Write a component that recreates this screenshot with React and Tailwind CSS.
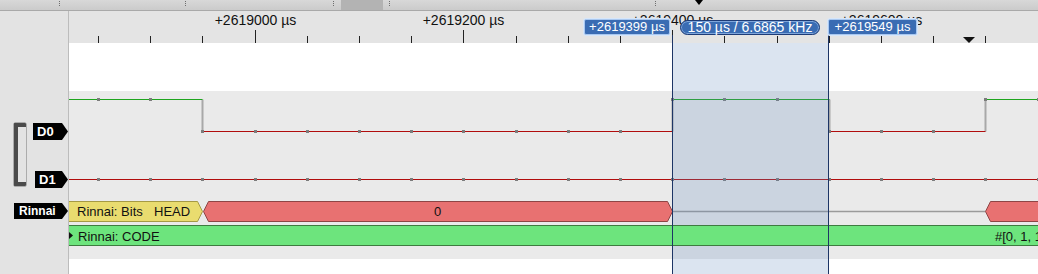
import React from "react";

const STEP = 52.2;
const T0 = 29; // first tick, relative to plot column
const tx = (k) => Math.round(T0 + STEP * k) + 0.5;
const TICKS = Array.from({ length: 19 }, (_, k) => k);

const HIGH = 8.5;
const LOW = 40.5;
const D1Y = 88.5;
const EDGES = [2, 11, 14, 17];

function levelAt(k) {
  let lvl = 1;
  for (const e of EDGES) if (k >= e) lvl = 1 - lvl;
  return lvl;
}

function TopBar() {
  const Dots = ({ className }) => (
    <div className={"flex flex-col gap-[1px] pt-[1px] " + className}>
      <span className="w-[1px] h-[1px] bg-[#6d6d6d]" />
      <span className="w-[1px] h-[1px] bg-[#6d6d6d]" />
      <span className="w-[1px] h-[1px] bg-[#6d6d6d]" />
    </div>
  );
  return (
    <div className="flex h-[11px] border-b border-[#a9a9a9] bg-gradient-to-b from-[#d8d8d8] to-[#cbcbcb]">
      <div className="flex w-[341px]">
        <Dots className="ml-[59px]" />
        <Dots className="ml-[125px]" />
        <Dots className="ml-[147px]" />
      </div>
      <div className="w-[42px] bg-[#b3b3b3]" />
      <div className="flex flex-1">
        <Dots className="ml-[6px]" />
        <Dots className="ml-[265px]" />
        <div className="ml-[39px] w-0 h-0 border-x-[4px] border-x-transparent border-t-[5px] border-t-black" />
      </div>
    </div>
  );
}

function Tag({ children, width, className = "" }) {
  return (
    <div
      className={
        "flex items-center bg-black text-white font-bold pl-[4px] [clip-path:polygon(0_0,calc(100%_-_6px)_0,100%_50%,calc(100%_-_6px)_100%,0_100%)] " +
        className
      }
      style={{ width }}
    >
      {children}
    </div>
  );
}

function LeftPanel() {
  return (
    <div className="w-[69px] shrink-0 border-r border-[#bcbcbc] bg-[#e3e3e3] pt-[112px]">
      <div className="flex h-[65px]">
        <div className="ml-[14px] w-[12px] h-[63px] border-l-[4px] border-y-[4px] border-[#4b4b4b] rounded-[1px] shadow-[0_0_0_0.5px_#777]" />
        <div className="ml-auto flex flex-col items-end">
          <Tag width={35} className="h-[17px] text-[13px]">D0</Tag>
          <Tag width={33} className="mt-[31px] h-[17px] text-[13px]">D1</Tag>
        </div>
      </div>
      <div className="mt-[15px] flex justify-end">
        <Tag width={54} className="h-[16px] text-[12px] pl-[5px]">Rinnai</Tag>
      </div>
    </div>
  );
}

function Ruler() {
  const majors = [
    [3, "+2619000 µs"],
    [7, "+2619200 µs"],
    [11, "+2619400 µs"],
    [15, "+2619600 µs"],
  ];
  return (
    <div className="h-[32px] bg-[#e4e4e4]">
      <svg width="969" height="32" className="block">
        {TICKS.map((k) => (
          <line
            key={k}
            x1={tx(k)}
            x2={tx(k)}
            y1={k % 4 === 3 ? 19 : 25}
            y2={32}
            stroke="#222"
            strokeWidth="1"
          />
        ))}
        {majors.map(([k, t]) => (
          <text key={k} x={tx(k)} y={14} textAnchor="middle" fontSize="14" fill="#111">
            {t}
          </text>
        ))}
        <polygon points="894,26 906,26 900,32" fill="#111" />
      </svg>
    </div>
  );
}

function Channels() {
  // D0 horizontal runs
  const bounds = [0, ...EDGES.map((e) => tx(e)), 969];
  const runs = [];
  for (let i = 0; i < bounds.length - 1; i++) {
    runs.push({ x1: bounds[i], x2: bounds[i + 1], high: i % 2 === 0 });
  }
  const a = tx(2);
  const b = tx(11);
  const c = tx(17);
  return (
    <div className="h-[168px] bg-[#eaeaea]">
      <svg width="969" height="168" className="block">
        {/* D0 */}
        {EDGES.map((e) => (
          <line key={e} x1={tx(e)} x2={tx(e)} y1={HIGH} y2={LOW} stroke="#a8a8a8" strokeWidth="2" />
        ))}
        {runs.map((r, i) => (
          <line
            key={i}
            x1={r.x1}
            x2={r.x2}
            y1={r.high ? HIGH : LOW}
            y2={r.high ? HIGH : LOW}
            stroke={r.high ? "#1ea51e" : "#b10d0d"}
            strokeWidth="1"
          />
        ))}
        {TICKS.map((k) => (
          <rect
            key={"d0" + k}
            x={tx(k) - 1.5}
            y={(levelAt(k) ? HIGH : LOW) - 1.5}
            width="3"
            height="3"
            fill="#7c7c7c"
          />
        ))}
        {/* D1 */}
        <line x1="0" x2="969" y1={D1Y} y2={D1Y} stroke="#b10d0d" strokeWidth="1" />
        {TICKS.map((k) => (
          <rect key={"d1" + k} x={tx(k) - 1.5} y={D1Y - 1.5} width="3" height="3" fill="#7c7c7c" />
        ))}

        {/* Rinnai: Bits */}
        <line x1={b} x2={c} y1="120.5" y2="120.5" stroke="#9a9a9a" strokeWidth="1.5" />
        <polygon
          points={`-6,110.5 ${a - 5},110.5 ${a},120.5 ${a - 5},130.5 -6,130.5`}
          fill="#e9dc6f"
          stroke="#a59a44"
          strokeWidth="1"
        />
        <polygon
          points={`${a + 1},120.5 ${a + 6},110.5 ${b - 5},110.5 ${b},120.5 ${b - 5},130.5 ${a + 6},130.5`}
          fill="#e87171"
          stroke="#8e4545"
          strokeWidth="1"
        />
        <polygon
          points={`${c},120.5 ${c + 5},110.5 975,110.5 975,130.5 ${c + 5},130.5`}
          fill="#e87171"
          stroke="#8e4545"
          strokeWidth="1"
        />
        <text x="8" y="125" fontSize="13" fill="#111">Rinnai: Bits</text>
        <text x="85" y="125" fontSize="13" fill="#111">HEAD</text>
        <text x={(a + b) / 2} y="125" fontSize="13" fill="#111" textAnchor="middle">0</text>

        {/* Rinnai: CODE */}
        <rect x="-2" y="134.5" width="975" height="20" fill="#6de47d" stroke="#3e7b40" strokeWidth="1" />
        <polygon points="0,141 4,144.5 0,148" fill="#111" />
        <text x="9" y="149.5" fontSize="13" fill="#111">Rinnai: CODE</text>
        <text x="926" y="149.5" fontSize="13" fill="#111">#[0, 1, 1, 0]</text>
      </svg>
    </div>
  );
}

function Selection() {
  return (
    <>
      {/* tint, leaving the CODE row untouched */}
      <div className="absolute top-[32px] h-[182px] left-[604px] w-[155px] bg-[rgba(101,140,189,0.23)]" />
      <div className="absolute top-[235px] bottom-0 left-[604px] w-[155px] bg-[rgba(101,140,189,0.23)]" />
      <div className="absolute top-[24px] bottom-0 left-[603px] w-[157px] border-x border-[#1d3566]" />
      <div className="absolute top-[8px] left-[515px] w-[86px] h-[16px] rounded-[2px] border border-[#a9c8f0] bg-[#3a6cb3] text-white text-[13px] leading-[14px] flex items-center justify-center shadow-[0_0_0_1px_#d6e6fa]">
        +2619399 µs
      </div>
      <div className="absolute top-[9px] left-[611px] w-[140px] h-[15px] rounded-full border border-[#1e3c77] bg-[#3a6cb3] text-white text-[14px] leading-[13px] flex items-center justify-center shadow-[inset_0_0_0_1px_#7fa6db]">
        150 µs / 6.6865 kHz
      </div>
      <div className="absolute top-[8px] left-[759px] w-[89px] h-[16px] rounded-[2px] border border-[#a9c8f0] bg-[#3a6cb3] text-white text-[13px] leading-[14px] flex items-center justify-center shadow-[0_0_0_1px_#d6e6fa]">
        +2619549 µs
      </div>
    </>
  );
}

export default function App() {
  return (
    <div className="w-[1038px] h-[274px] overflow-hidden bg-white font-['Liberation_Sans',Arial,sans-serif] select-none">
      <TopBar />
      <div className="flex h-[263px]">
        <LeftPanel />
        <div className="relative flex flex-1 flex-col overflow-hidden">
          <Ruler />
          <div className="h-[48px] bg-white" />
          <Channels />
          <div className="flex-1 bg-white" />
          <Selection />
        </div>
      </div>
    </div>
  );
}
